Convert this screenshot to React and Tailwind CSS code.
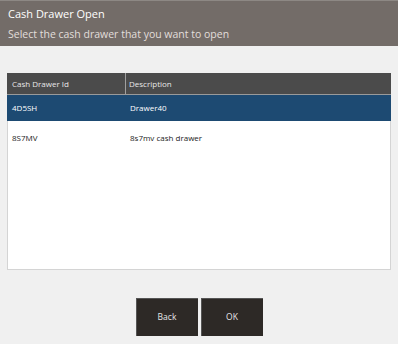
export default function App() {
  const font = { fontFamily: '"Open Sans", "Noto Sans", sans-serif' };
  return (
    <div className="w-[398px] h-[344px] bg-[#f0f0f0] flex flex-col overflow-hidden" style={font}>
      <div className="h-[46px] bg-[#736c68] border-t border-[#8d8884] flex flex-col px-[8px] pt-[6px]">
        <div className="text-[11px] leading-[14px] text-white">Cash Drawer Open</div>
        <div className="text-[10.5px] leading-[14px] text-[#e2dedb] mt-[6px]">Select the cash drawer that you want to open</div>
      </div>
      <div className="mx-[7px] mt-[27px] w-[384px] h-[197px] bg-white border border-[#d4d4d4] flex flex-col">
        <div className="h-[22px] bg-[#4b4b4b] flex text-[8px] text-[#e8e8e8] -mx-px -mt-px border-b border-[#9a9a9a]">
          <div className="w-[119px] border-r border-[#a0a0a0] flex items-center pl-[5px]">Cash Drawer Id</div>
          <div className="flex-1 flex items-center pl-[3px]">Description</div>
        </div>
        <div className="h-[26px] bg-[#1d4a72] flex text-[8px] text-white -mx-px">
          <div className="w-[119px] flex items-center pl-[5px]">4D5SH</div>
          <div className="flex-1 flex items-center pl-[4px]">Drawer40</div>
        </div>
        <div className="h-[33px] flex text-[8px] text-[#222]">
          <div className="w-[118px] flex items-center pl-[4px]">8S7MV</div>
          <div className="flex-1 flex items-center pl-[4px]">8s7mv cash drawer</div>
        </div>
      </div>
      <div className="flex justify-center gap-[3px] mt-[28px]">
        <button className="w-[62px] h-[38px] bg-[#2d2926] text-[#e6e6e6] text-[8.5px] border-l border-t border-[#555]">Back</button>
        <button className="w-[62px] h-[38px] bg-[#2d2926] text-[#e6e6e6] text-[8.5px] border-l border-t border-[#555]">OK</button>
      </div>
    </div>
  );
}
